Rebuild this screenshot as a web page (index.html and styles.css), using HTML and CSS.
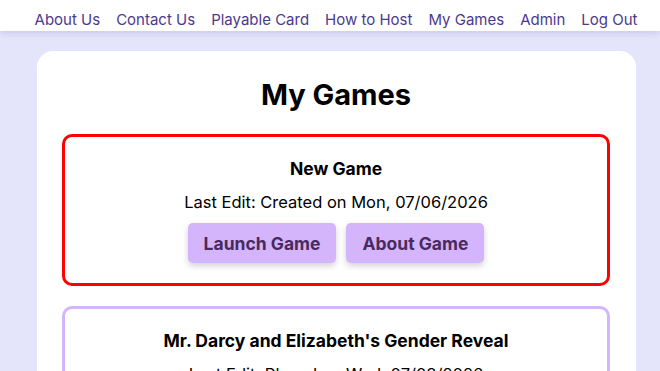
FILE: index.html
```
<!DOCTYPE html>
<html lang="en">
<head>
  <meta charset="UTF-8" />
  <title>My Games</title>
  <link rel="stylesheet" href="styles.css">
</head>
<body>
  <header class="topbar">
    <nav class="nav">
      <a href="#">About Us</a>
      <a href="#">Contact Us</a>
      <a href="#">Playable Card</a>
      <a href="#">How to Host</a>
      <a href="#">My Games</a>
      <a href="#">Admin</a>
      <a href="#">Log Out</a>
    </nav>
  </header>

  <main class="page">
    <section class="card">
      <h1>My Games</h1>

      <div class="game selected">
        <h2>New Game</h2>
        <p>Last Edit: Created on Mon, 07/06/2026</p>
        <div class="actions">
          <button class="btn">Launch Game</button>
          <button class="btn">About Game</button>
        </div>
      </div>

      <div class="game">
        <h2>Mr. Darcy and Elizabeth's Gender Reveal</h2>
        <p>Last Edit: Played on Wed, 07/08/2026</p>
        <div class="actions">
          <button class="btn">Launch Game</button>
          <button class="btn">About Game</button>
        </div>
      </div>
    </section>
  </main>
</body>
</html>
```

FILE: styles.css
```
body {
  margin: 0;
  background-color: #e4e4fb;
  font-family: Inter, "Open Sans", sans-serif;
  color: #000;
  overflow: hidden;
}

.topbar {
  background-color: #fff;
  height: 31px;
  box-shadow: 0 2px 6px rgba(80, 80, 140, 0.18);
}

.nav {
  display: flex;
  justify-content: center;
  gap: 16px;
  padding-left: 12px;
  padding-top: 10px;
}

.nav a {
  color: #4b3a8c;
  text-decoration: none;
  font-size: 15px;
  line-height: 20px;
}

.page {
  padding: 20px 24px 0 37px;
}

.card {
  background-color: #fff;
  border-radius: 16px;
  padding: 25px 26px 20px 25px;
}

.card h1 {
  margin: 0 0 20px;
  text-align: center;
  font-size: 29px;
  line-height: 38px;
  font-weight: 700;
}

.game {
  border: 3px solid #d4b5fc;
  border-radius: 10px;
  padding: 21px 20px 20px;
  text-align: center;
  margin-bottom: 20px;
}

.game.selected {
  border-color: #f00;
}

.game h2 {
  margin: 0;
  font-size: 17.5px;
  line-height: 22px;
  font-weight: 700;
}

.game p {
  margin: 11px 0 0;
  font-size: 16.5px;
  line-height: 22px;
}

.actions {
  display: flex;
  justify-content: center;
  gap: 10px;
  margin-top: 10px;
}

.btn {
  background-color: #d4b5fc;
  color: #4a2a5e;
  border: none;
  border-radius: 5px;
  height: 40px;
  padding: 0 16px;
  font-family: inherit;
  font-size: 17.5px;
  font-weight: 700;
  box-shadow: 0 3px 6px rgba(0, 0, 0, 0.18);
}
```
